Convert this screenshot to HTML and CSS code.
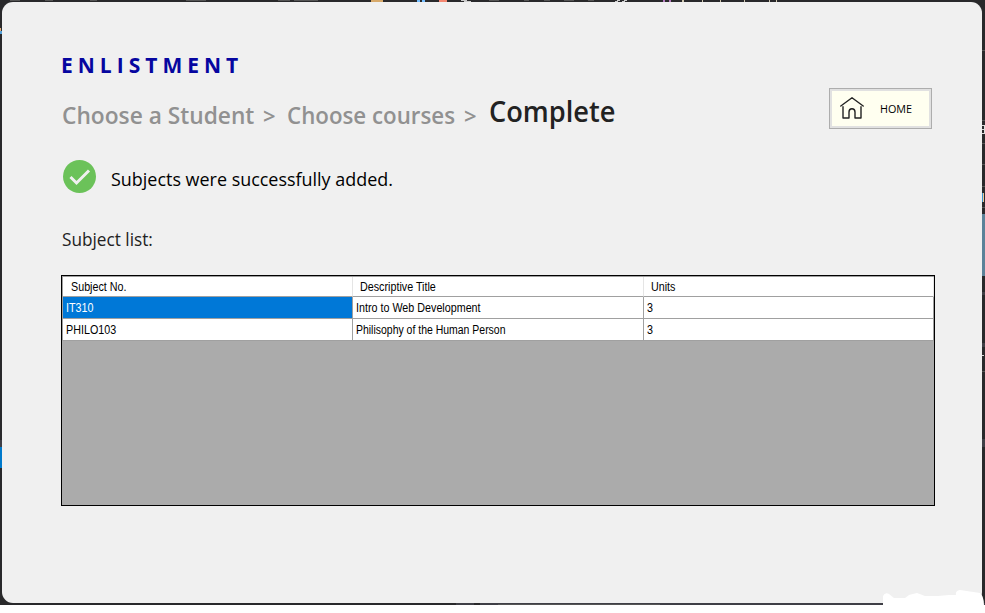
FILE: index.html
```html
<!DOCTYPE html>
<html lang="en">
<head>
<meta charset="utf-8">
<title>Enlistment</title>
<link rel="stylesheet" href="styles.css">
</head>
<body>
<div class="desktop">
  <svg class="backdrop" width="985" height="605" viewBox="0 0 985 605" shape-rendering="crispEdges">
    <path fill="#555" d="M10 0h10v1h-10zM45 0h8v1h-8zM90 0h7v1h-7zM186 0h20v1h-20zM278 0h12v1h-12zM294 0h24v1h-24zM489 0h10v1h-10zM524 0h5v1h-5zM544 0h6v1h-6zM564 0h10v1h-10zM588 0h6v1h-6z"/>
    <path fill="#d7a96a" d="M371 0h12v2h-12z"/>
    <path fill="#75beff" d="M417 0h3v2h-3zM422 0h3v2h-3z"/>
    <path fill="#f48771" d="M439 0h8v2h-8z"/>
    <path fill="#ccc" d="M461 0h6v1h-6zM464 1h7v1h-7zM617 0h3v1h-3zM624 0h3v1h-3zM615 1h3v1h-3zM622 1h3v1h-3z"/>
    <path fill="#b57cc0" d="M663 0h2v2h-2zM669 0h2v2h-2z"/>
    <path fill="#d0c8b0" d="M682 0h2v2h-2zM702 0h1v2h-1zM720 0h1v2h-1zM744 0h1v2h-1zM769 0h1v2h-1zM776 0h1v2h-1z"/>
    <path fill="#e0b080" d="M0 28h1v3h-1z"/>
    <path fill="#54a0d8" d="M0 31h2v3h-2z"/>
    <path fill="#3f3f46" d="M0 440h2v7h-2zM982 292h3v3h-3zM982 343h3v4h-3zM982 439h3v8h-3zM456 603h18v2h-18zM480 603h505v2h-505z"/>
    <path fill="#007acc" d="M0 447h2v21h-2z"/>
    <path fill="#555" d="M982 50h3v1h-3zM982 120h3v1h-3zM982 143h3v1h-3zM982 164h3v1h-3zM982 186h3v1h-3zM982 207h3v1h-3zM982 371h3v1h-3zM498 604h162v1h-162z"/>
    <path fill="#ddd" d="M982 125h3v1h-3zM982 129h3v1h-3zM982 133h3v1h-3zM984 126h1v7h-1zM982 355h2v1h-2z"/>
    <path fill="#3794d0" d="M982 193h1v9h-1z"/>
    <path fill="#f0c898" d="M983 193h1v9h-1z"/>
    <path fill="#5b8299" d="M982 214h3v62h-3z"/>
  </svg>
  <main class="window">
    <h1 class="title">ENLISTMENT</h1>
    <div class="topline">
      <nav class="crumbs">
        <span class="student">Choose a Student</span>
        <span class="sep">&gt;</span>
        <span class="courses">Choose courses</span>
        <span class="sep">&gt;</span>
        <span class="current">Complete</span>
      </nav>
      <button class="home">
        <svg width="24" height="22" viewBox="0 0 24 22" fill="none" stroke="#222" stroke-width="1.4" stroke-linecap="round" stroke-linejoin="round">
          <path d="M.8 9 12 .8 23.2 9M3 9.8V21h6v-6c0-2 1-3.2 3-3.2s3 1.2 3 3.2v6h6V9.8"/>
        </svg>
        <span>HOME</span>
      </button>
    </div>
    <div class="status">
      <svg width="33" height="33" viewBox="0 0 33 33">
        <circle cx="16.5" cy="16.5" r="16.5" fill="#6bc259"/>
        <path d="m7.5 17 6 6L26 10.5" fill="none" stroke="#f0f0f0" stroke-width="3"/>
      </svg>
      <span class="message">Subjects were successfully added.</span>
    </div>
    <h2 class="label"><span>Subject list:</span></h2>
    <div class="grid">
      <div class="row head"><span><b>Subject No.</b></span><span><b>Descriptive Title</b></span><span><b>Units</b></span></div>
      <div class="row"><span class="selected"><b>IT310</b></span><span><b>Intro to Web Development</b></span><span><b>3</b></span></div>
      <div class="row"><span><b>PHILO103</b></span><span><b class="tight">Philisophy of the Human Person</b></span><span><b>3</b></span></div>
    </div>
  </main>
  <svg class="smudge" width="102" height="16" viewBox="0 0 102 16">
    <path fill="#fff" d="M0 16V6Q2 2 6 4L11 8H22L26 5 34 3 42 6H55L66 5 73 5Q72 1 77 0L97 3Q101 6 101 16Z"/>
  </svg>
</div>
</body>
</html>
```
FILE: styles.css
```css
* { box-sizing: border-box; }
body {
  margin: 0;
  background: #fff;
  color: #000;
  font-family: "Open Sans", "Noto Sans", sans-serif;
}
.desktop {
  position: relative;
  height: 605px;
  padding: 2px 3px 2px 2px;
  background: #29292b;
}
.backdrop { position: absolute; left: 0; top: 0; }
.window {
  position: relative;
  height: 601px;
  padding: 49px 47px 0 59px;
  border-radius: 11px;
  background: #f0f0f0;
}
.title {
  margin: 0;
  font-size: 21px;
  line-height: 28px;
  font-weight: 700;
  letter-spacing: 5px;
  color: #0606a0;
}
.topline {
  display: flex;
  justify-content: space-between;
  align-items: flex-start;
  height: 81px;
  padding: 9px 3px 0 1px;
}
.crumbs {
  display: grid;
  grid-template-columns: 201px 24px 177px 25px 130px;
  justify-items: start;
  padding-top: 10px;
  font-size: 24px;
  line-height: 34px;
  font-weight: 600;
  color: #919191;
  white-space: nowrap;
}
.crumbs span { transform-origin: left; }
.student { transform: scaleX(.947); }
.courses { transform: scaleX(.929); }
.sep { font-size: 22px; }
.crumbs .current {
  margin-top: -4px;
  font-size: 28px;
  color: #222;
  transform: scaleX(.972);
}
.home {
  display: flex;
  align-items: center;
  width: 103px;
  height: 41px;
  padding: 0 0 0 8px;
  border: 1px solid #adadad;
  box-shadow: inset 0 0 0 2px #e1e1e1;
  background: #fffff0;
  font: 500 11px "Open Sans", sans-serif;
  color: #000;
  gap: 16px;
}
.home svg { margin: -1px 0 0 2px; }
.home span { transform: scaleX(.98); transform-origin: left; }
.status {
  display: flex;
  align-items: center;
  gap: 15px;
  height: 33px;
  margin-left: 2px;
}
.message, .label {
  font-size: 19px;
  line-height: 28px;
  font-weight: 400;
  white-space: nowrap;
}
.message {
  margin-top: 5px;
  transform: scaleX(.944);
  transform-origin: left;
}
.label { margin: 32px 0 22px 1px; color: #222; }
.label span {
  display: inline-block;
  transform: scaleX(.905);
  transform-origin: left;
}
.grid {
  width: 874px;
  height: 231px;
  border: 1px solid #000;
  background: #ababab;
  font: 12px "Liberation Sans", sans-serif;
}
.row {
  display: grid;
  grid-template-columns: 290px 291px 290px;
  height: 22px;
  border-left: 1px solid #a0a0a0;
  background: #fff;
  white-space: nowrap;
}
.row > span {
  padding-left: 3px;
  border-right: 1px solid #a0a0a0;
  border-bottom: 1px solid #a0a0a0;
  line-height: 21px;
}
.row b {
  display: inline-block;
  font-weight: 400;
  transform: translateY(1px) scaleX(.895);
  transform-origin: left;
}
.row .tight { transform: translateY(1px) scaleX(.872); }
.head { height: 21px; border-top: 1px solid #a0a0a0; }
.head > span { padding-left: 8px; border-right-color: #e5e5e5; line-height: 19px; }
.head > span + span { padding-left: 7px; }
.row .selected { background: #0078d7; color: #fff; }
.smudge { position: absolute; left: 883px; top: 590px; }
```
